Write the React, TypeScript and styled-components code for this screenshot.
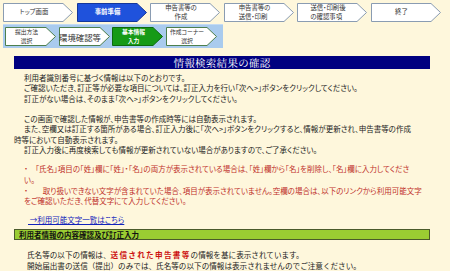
import React from 'react';
import styled, { createGlobalStyle } from 'styled-components';

// Global page styles
const GlobalStyle = createGlobalStyle`
  html, body {
    margin: 0;
    padding: 0;
    background: #fef7dc;
  }
  body {
    font-family: "Noto Sans CJK JP", "Noto Sans", sans-serif;
    color: #222;
  }
`;

const Page = styled.div`
  width: 450px;
  height: 271px;
  overflow: hidden;
  padding: 3px 0 0 3px;
  box-sizing: border-box;
  background: #fef7dc;
`;

// Step navigation
const StepRow = styled.div`
  display: flex;
  gap: 3.5px;
`;

const SubBand = styled.div`
  display: flex;
  width: fit-content;
  gap: 2.5px;
  margin-top: 2px;
  padding: 2px 6px 2px 2px;
  background: #a9cbee;
  border-top: 1px solid #c4dbf3;
`;

const StepBox = styled.div<{ $w: number }>`
  position: relative;
  width: ${(p) => p.$w}px;
  height: 19px;
  display: flex;
  align-items: center;
  justify-content: center;
  padding-right: 8px;
  box-sizing: border-box;
  flex: none;
`;

const StepShape = styled.svg`
  position: absolute;
  inset: 0;
  overflow: visible;
`;

const StepLabel = styled.span<{ $size: number; $light?: boolean; $left?: boolean }>`
  position: relative;
  font-size: ${(p) => p.$size}px;
  line-height: ${(p) => Math.max(p.$size + 1.6, 8.2)}px;
  color: ${(p) => (p.$light ? '#fff' : '#333')};
  font-weight: ${(p) => (p.$light ? 700 : 400)};
  text-align: ${(p) => (p.$left ? 'left' : 'center')};
  white-space: nowrap;
  font-feature-settings: "palt";
`;

type StepProps = {
  w: number;
  fill: string;
  stroke: string;
  size: number;
  light?: boolean;
  left?: boolean;
  lines: string[];
};

const Step: React.FC<StepProps> = ({ w, fill, stroke, size, light, left, lines }) => {
  const h = 19;
  const tip = 10;
  return (
    <StepBox $w={w}>
      <StepShape width={w} height={h} viewBox={`0 0 ${w} ${h}`}>
        <polygon
          points={`0.5,0.5 ${w - tip},0.5 ${w - 0.5},${h / 2} ${w - tip},${h - 0.5} 0.5,${h - 0.5}`}
          fill={fill}
          stroke={stroke}
          strokeWidth={1}
        />
      </StepShape>
      <StepLabel $size={size} $light={light} $left={left}>
        {lines.map((l, i) => (
          <React.Fragment key={i}>
            {i > 0 && <br />}
            {l}
          </React.Fragment>
        ))}
      </StepLabel>
    </StepBox>
  );
};

// Main content
const Main = styled.main`
  width: 416px;
  margin: 8px 0 0 11px;
`;

const TitleBar = styled.h1`
  margin: 0;
  height: 13px;
  background: #000080;
  color: #fff;
  font-family: "Noto Serif CJK JP", "Noto Sans CJK JP", serif;
  font-weight: 400;
  font-size: 10.5px;
  line-height: 13px;
  text-align: center;
  letter-spacing: 0.3px;
`;

const Para = styled.div`
  margin-top: 4px;
  font-size: 7.5px;
  line-height: 10.3px;
  font-feature-settings: "palt";
  & + & {
    margin-top: 10.3px;
  }
`;

const Line = styled.div<{ $indent?: boolean }>`
  white-space: nowrap;
  padding-left: ${(p) => (p.$indent ? 10 : 0)}px;
`;

const Notes = styled.div`
  margin-top: 9px;
  padding-left: 10px;
  font-size: 7.5px;
  line-height: 10.6px;
  color: #c0302a;
  font-feature-settings: "palt";
`;

const LinkRow = styled.div`
  margin-top: 8px;
  padding-left: 14px;
  font-size: 7.5px;
  line-height: 10px;
  font-feature-settings: "palt";
`;

const TextLink = styled.a`
  color: #1122bb;
  text-decoration: underline;
`;

const SectionBar = styled.h2`
  margin: 4px 0 0;
  height: 11px;
  box-sizing: border-box;
  background: #9acd32;
  border: 1px solid #4a5a2a;
  padding-left: 4px;
  font-size: 7.5px;
  line-height: 9px;
  font-weight: 700;
  color: #111;
`;

const Info = styled.div`
  margin-top: 9px;
  padding-left: 13px;
  font-size: 7.6px;
  line-height: 11px;
  white-space: nowrap;
`;

const Emph = styled.strong`
  color: #cc1010;
  letter-spacing: 1.3px;
`;

const App: React.FC = () => {
  const top = { w: 70, fill: '#fff', stroke: '#8a9cb2', size: 6.4 };
  const sub = { w: 51, fill: '#fff', stroke: '#4d7f4d', size: 5.8 };
  return (
    <Page>
      <GlobalStyle />
      <StepRow>
        <Step {...top} lines={['トップ画面']} />
        <Step {...top} fill="#1f52dc" stroke="#15379a" light lines={['事前準備']} />
        <Step {...top} lines={['申告書等の', '作成']} />
        <Step {...top} left lines={['申告書等の', '送信・印刷']} />
        <Step {...top} left lines={['送信・印刷後', 'の確認事項']} />
        <Step {...top} lines={['終了']} />
      </StepRow>
      <SubBand>
        <Step {...sub} lines={['提出方法', '選択']} />
        <Step {...sub} size={8.4} lines={['環境確認等']} />
        <Step {...sub} fill="#169a16" stroke="#0d6a0d" light lines={['基本情報', '入力']} />
        <Step {...sub} lines={['作成コーナー', '選択']} />
      </SubBand>

      <Main>
        <TitleBar>情報検索結果の確認</TitleBar>

        <Para>
          <Line $indent>利用者識別番号に基づく情報は以下のとおりです。</Line>
          <Line $indent>
            ご確認いただき、訂正等が必要な項目については、訂正入力を行い「次へ&gt;」ボタンをクリックしてください。
          </Line>
          <Line $indent>訂正がない場合は、そのまま「次へ&gt;」ボタンをクリックしてください。</Line>
        </Para>
        <Para>
          <Line $indent>この画面で確認した情報が、申告書等の作成時等には自動表示されます。</Line>
          <Line $indent>
            また、空欄又は訂正する箇所がある場合、訂正入力後に「次へ&gt;」ボタンをクリックすると、情報が更新され、申告書等の作成
          </Line>
          <Line>時等において自動表示されます。</Line>
          <Line $indent>訂正入力後に再度検索しても情報が更新されていない場合がありますので、ご了承ください。</Line>
        </Para>

        <Notes>
          <Line>
            ・　「氏名」項目の「姓」欄に「姓」・「名」の両方が表示されている場合は、「姓」欄から「名」を削除し、「名」欄に入力してくださ
          </Line>
          <Line>い。</Line>
          <Line>
            ・　　取り扱いできない文字が含まれていた場合、項目が表示されていません。空欄の場合は、以下のリンクから利用可能文字
          </Line>
          <Line>をご確認いただき、代替文字にて入力してください。</Line>
        </Notes>

        <LinkRow>
          <TextLink href="#">{'\u00a0→利用可能文字一覧はこちら'}</TextLink>
        </LinkRow>

        <SectionBar>利用者情報の内容確認及び訂正入力</SectionBar>

        <Info>
          氏名等の以下の情報は、<Emph>送信された申告書等</Emph>の情報を基に表示されています。
          <br />
          開始届出書の送信（提出）のみでは、氏名等の以下の情報は表示されませんのでご注意ください。
        </Info>
      </Main>
    </Page>
  );
};

export default App;
